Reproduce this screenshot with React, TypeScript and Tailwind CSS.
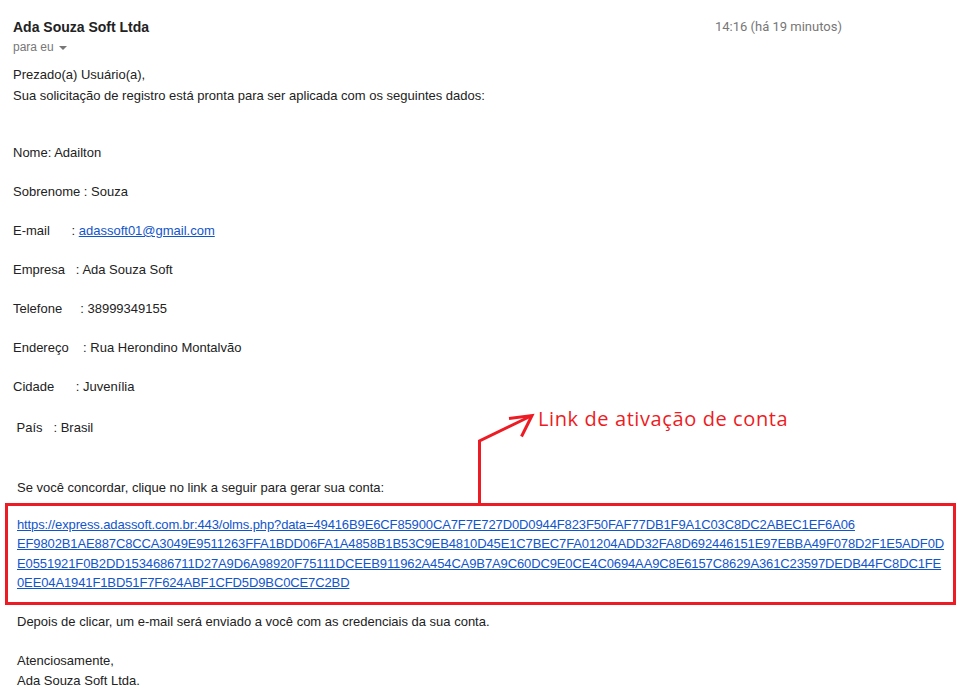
import React from "react";

const fields: { label: string; value: React.ReactNode }[] = [
  { label: "Nome: ", value: "Adailton" },
  { label: "Sobrenome : ", value: "Souza" },
  {
    label: "E-mail      : ",
    value: (
      <a href="mailto:adassoft01@gmail.com" className="text-[#1155cc] underline">
        adassoft01@gmail.com
      </a>
    ),
  },
  { label: "Empresa   : ", value: "Ada Souza Soft" },
  { label: "Telefone     : ", value: "38999349155" },
  { label: "Endereço    : ", value: "Rua Herondino Montalvão" },
  { label: "Cidade      : ", value: "Juvenília" },
];

const linkLines = [
  "https://express.adassoft.com.br:443/olms.php?data=49416B9E6CF85900CA7F7E727D0D0944F823F50FAF77DB1F9A1C03C8DC2ABEC1EF6A06",
  "EF9802B1AE887C8CCA3049E9511263FFA1BDD06FA1A4858B1B53C9EB4810D45E1C7BEC7FA01204ADD32FA8D692446151E97EBBA49F078D2F1E5ADF0D",
  "E0551921F0B2DD1534686711D27A9D6A98920F75111DCEEB911962A454CA9B7A9C60DC9E0CE4C0694AA9C8E6157C8629A361C23597DEDB44FC8DC1FE",
  "0EE04A1941F1BD51F7F624ABF1CFD5D9BC0CE7C2BD",
];

export default function App() {
  return (
    <div className="relative h-[690px] w-[959px] overflow-hidden bg-white text-[13px] text-[#222] font-['Liberation_Sans',Arial,sans-serif]">
      {/* header */}
      <div className="flex items-start justify-between pt-[17px] pl-[13px] pr-[117px]">
        <div>
          <div className="h-5 leading-5 text-[14px] font-bold text-[#222]">Ada Souza Soft Ltda</div>
          <div className="flex h-5 items-center gap-[5px] text-[12px] text-[#777]">
            <span>para eu</span>
            <span className="mt-[1px] h-0 w-0 border-x-[4px] border-t-[4px] border-x-transparent border-t-[#777]" />
          </div>
        </div>
        <div className="h-5 leading-5 text-[13px] text-[#777] font-['Roboto',Arial,sans-serif]">
          14:16 (há 19 minutos)
        </div>
      </div>

      {/* body */}
      <div className="leading-5">
        <div className="mt-[8px] pl-[13px]">Prezado(a) Usuário(a),</div>
        <div className="mt-[1px] pl-[13px]">Sua solicitação de registro está pronta para ser aplicada com os seguintes dados:</div>

        <div className="mt-[37px] flex flex-col gap-[19px] pl-[13px]">
          {fields.map((f) => (
            <div key={f.label} className="whitespace-pre">
              {f.label}
              {f.value}
            </div>
          ))}
        </div>

        <div className="mt-[21px] pl-[13px] whitespace-pre"> País   : Brasil</div>

        <div className="mt-[40px] pl-[17px]">Se você concordar, clique no link a seguir para gerar sua conta:</div>

        <div className="mt-[5px] ml-[5px] mr-[3px] border-[3px] border-[#ed1c24] pt-[9px] pb-[9px] pl-[9px] leading-[19.4px]">
          <a href="#" className="block text-[#1155cc] underline tracking-[-0.12px]">
            {linkLines.map((l) => (
              <span key={l} className="block whitespace-nowrap">
                {l}
              </span>
            ))}
          </a>
        </div>

        <div className="mt-[7px] pl-[17px]">Depois de clicar, um e-mail será enviado a você com as credenciais da sua conta.</div>
        <div className="mt-[19px] pl-[17px]">Atenciosamente,</div>
        <div className="pl-[17px]">Ada Souza Soft Ltda.</div>
      </div>

      {/* annotation */}
      <svg className="absolute left-0 top-0" width="959" height="690" viewBox="0 0 959 690" fill="none">
        <path d="M479.5 504 V441 L531 416" stroke="#ed1c24" strokeWidth="3" />
        <path d="M509 418.5 L532 415.5 L521.5 436.5" stroke="#ed1c24" strokeWidth="3" strokeLinejoin="miter" />
      </svg>
      <div className="absolute left-[538px] top-[406px] text-[20px] leading-[26px] tracking-[0.6px] text-[#ed1c24] font-['Open_Sans','Noto_Sans',sans-serif]">
        Link de ativação de conta
      </div>
    </div>
  );
}
